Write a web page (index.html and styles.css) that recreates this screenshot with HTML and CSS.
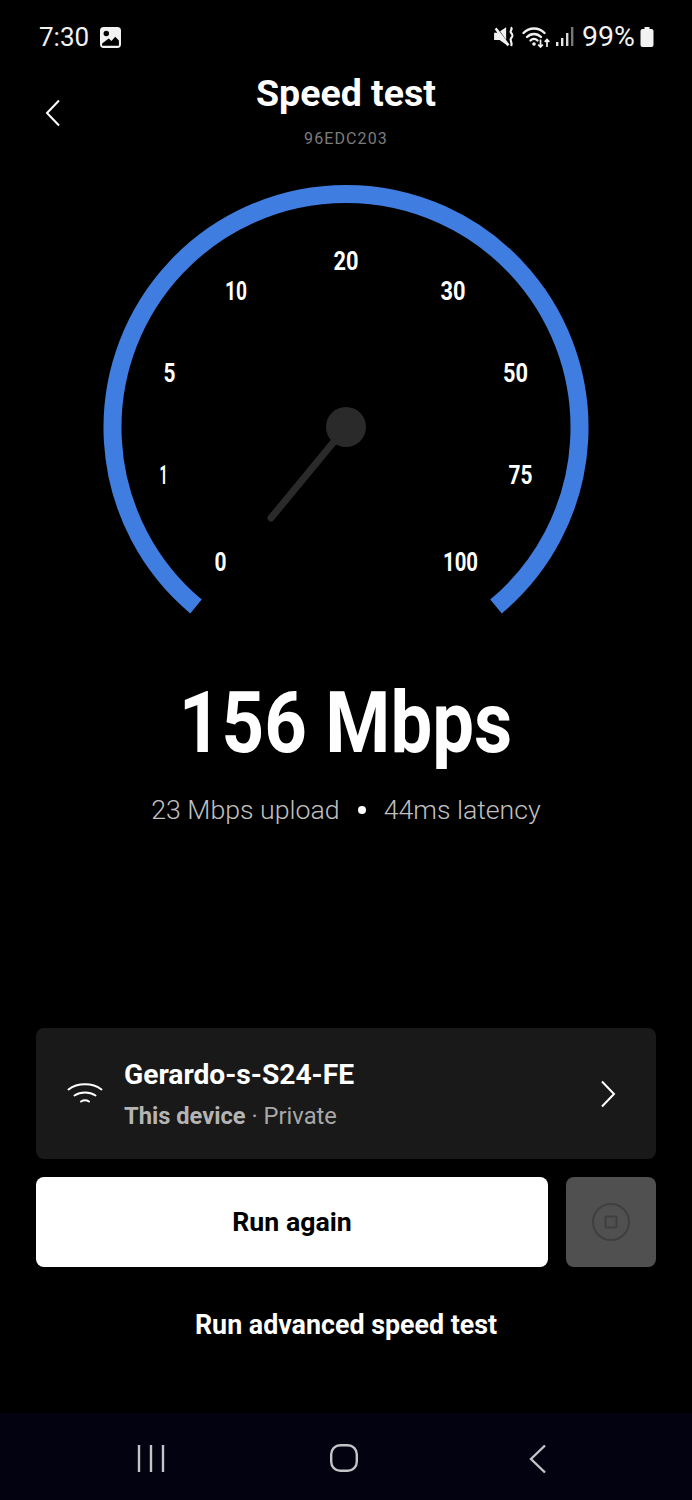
FILE: index.html
```html
<!DOCTYPE html>
<html lang="en">
<head>
<meta charset="utf-8">
<title>Speed test</title>
<link rel="stylesheet" href="styles.css">
</head>
<body>
<div class="screen">
  <div class="status">
    <div class="status-left">
      <span class="clock">7:30</span>
      <svg class="ic-gallery" viewBox="0 0 20 20"><path fill="#f2f2f2" fill-rule="evenodd" d="M3.500 0h13A3.500 3.500 0 0 1 20 3.500v13a3.500 3.500 0 0 1-3.500 3.500h-13A3.500 3.500 0 0 1 0 16.500v-13A3.500 3.500 0 0 1 3.500 0zM6 3.500a2.600 2.600 0 1 0 0 5.200 2.600 2.600 0 0 0 0-5.200zM2 17.800h16v-5l-3.500-3.600-3.600 4.200-2.600-2.400-6.300 4.800z"/></svg>
    </div>
    <div class="status-right">
      <svg class="ic-mute" viewBox="0 0 21 20"><path fill="#f2f2f2" d="M1 6.200h3L1.500 3 3.300 1.300 15 16.800 13.200 18.500 11.800 16.800 6 12.800H1z M6.500 4.800 12 1v11.500z"/><path fill="none" stroke="#f2f2f2" stroke-width="2" d="M16.500 1c1.800 2.400-1.800 3.200 0 5.200s1.800 3 0 5 1.800 3.400 0 7"/></svg>
      <svg class="ic-wifi" viewBox="0 0 28 22"><g fill="none" stroke="#f2f2f2" stroke-width="2.400" stroke-linecap="round"><path d="M1.500 7c6-6 15-6 21 0"/><path d="M5 11c4-4 10-4 14 0"/><path d="M8.500 14.500c2-2 5-2 7 0"/></g><circle cx="12" cy="18" r="1.800" fill="#f2f2f2"/><path fill="none" stroke="#f2f2f2" stroke-width="1.700" d="M18.500 13.500v7.500m-2.300-2.300 2.300 2.300 2.300-2.300M25 21v-7.500m-2.300 2.300 2.300-2.300 2.300 2.300"/></svg>
      <svg class="ic-signal" viewBox="0 0 18 20"><rect x="0" y="15" width="2.400" height="4" fill="#e8e8e8"/><rect x="5" y="11" width="2.400" height="8" fill="#e8e8e8"/><rect x="10" y="6" width="2.400" height="13" fill="#d8d8d8"/><rect x="15" y="0" width="2.400" height="19" fill="#777"/></svg>
      <span class="battery-text">99%</span>
      <svg class="ic-battery" viewBox="0 0 13 20"><path fill="#f2f2f2" d="M4 0h5v2h2a2 2 0 0 1 2 2v14a2 2 0 0 1-2 2H2a2 2 0 0 1-2-2V4a2 2 0 0 1 2-2h2z"/></svg>
    </div>
  </div>

  <header class="header">
    <svg class="back" viewBox="0 0 16 28"><path d="M14 1.500 2 14l12 12.500" fill="none" stroke="#fff" stroke-width="2"/></svg>
    <h1 class="title">Speed test</h1>
    <div class="serial">96EDC203</div>
  </header>

  <svg class="gauge" viewBox="0 0 692 460" role="img" aria-label="Speedometer">
    <path d="M196 426.500A233.500 233.500 0 1 1 496 426.500" fill="none" stroke="#3f7de0" stroke-width="18"/>
    <path d="M346 247 271 338" fill="none" stroke="#2a2a2a" stroke-width="7" stroke-linecap="round"/>
    <circle cx="346" cy="247" r="20" fill="#2a2a2a"/>
    <g class="tick">
      <text x="346" y="90" textLength="25" lengthAdjust="spacingAndGlyphs">20</text>
      <text x="236" y="120" textLength="22" lengthAdjust="spacingAndGlyphs">10</text>
      <text x="453" y="120" textLength="25" lengthAdjust="spacingAndGlyphs">30</text>
      <text x="169.500" y="202" textLength="12" lengthAdjust="spacingAndGlyphs">5</text>
      <text x="515.500" y="202" textLength="25" lengthAdjust="spacingAndGlyphs">50</text>
      <text x="163.500" y="304" textLength="8" lengthAdjust="spacingAndGlyphs">1</text>
      <text x="520.500" y="304" textLength="24" lengthAdjust="spacingAndGlyphs">75</text>
      <text x="220.500" y="391" textLength="12" lengthAdjust="spacingAndGlyphs">0</text>
      <text x="460.500" y="391" textLength="35" lengthAdjust="spacingAndGlyphs">100</text>
    </g>
  </svg>

  <div class="result"><span class="result-text">156 Mbps</span></div>
  <div class="stats"><span>23 Mbps upload</span><span class="dot"></span><span>44ms latency</span></div>

  <div class="device">
    <svg class="device-wifi" viewBox="0 0 36 24"><g fill="none" stroke="#fff" stroke-width="2" stroke-linecap="round"><path d="M1.500 7.500c9-7 24-7 33 0"/><path d="M7.500 13.500c6-4 15-4 21 0"/><path d="M14 19.500c2.500-1.500 5.500-1.500 8 0"/></g></svg>
    <div class="device-text">
      <div class="device-name">Gerardo-s-S24-FE</div>
      <div class="device-sub"><b>This device</b> · Private</div>
    </div>
    <svg class="chevron" viewBox="0 0 16 28"><path d="M2 1.500 14 14 2 26.500" fill="none" stroke="#fff" stroke-width="2"/></svg>
  </div>

  <div class="actions">
    <button class="run" type="button">Run again</button>
    <button class="stop" type="button" aria-label="Stop">
      <svg viewBox="0 0 38 38"><circle cx="19" cy="19" r="18" fill="none" stroke="#3f3f3f" stroke-width="2"/><rect x="13.500" y="13.500" width="11" height="11" rx="1" fill="none" stroke="#3f3f3f" stroke-width="2"/></svg>
    </button>
  </div>

  <div class="advanced">Run advanced speed test</div>

  <nav class="nav">
    <svg class="nav-recent" viewBox="0 0 28 28"><path d="M2 1v27M14 1v27M26 1v27" fill="none" stroke="#c4c4c8" stroke-width="2.400"/></svg>
    <svg class="nav-home" viewBox="0 0 28 28"><rect x="1.200" y="1.200" width="25.600" height="25.600" rx="9" fill="none" stroke="#c4c4c8" stroke-width="2.400"/></svg>
    <svg class="nav-back" viewBox="0 0 18 30"><path d="M16 1.500 2 15l14 13.500" fill="none" stroke="#c4c4c8" stroke-width="2.400"/></svg>
  </nav>
</div>
</body>
</html>
```

FILE: styles.css
```css
* { box-sizing: border-box; }
html, body { margin: 0; padding: 0; background: #000; }
body { font-family: Roboto, "Liberation Sans", sans-serif; color: #fff; }
.screen { width: 692px; height: 1500px; display: flex; flex-direction: column; overflow: hidden; background: #000; }

.status { height: 73px; padding: 22px 38px 0 39px; display: flex; justify-content: space-between; align-items: flex-start; color: #f2f2f2; font-size: 26px; line-height: 30px; }
.status-left, .status-right { display: flex; align-items: center; }
.clock { width: 61px; }
.ic-gallery { width: 21px; height: 21px; }
.ic-mute { width: 23px; height: 22px; margin-right: 6px; }
.ic-wifi { width: 28px; height: 22px; margin-right: 6px; }
.ic-signal { width: 18px; height: 20px; margin-right: 8px; }
.battery-text { width: 56px; font-size: 28.500px; }
.ic-battery { width: 14px; height: 20px; margin-left: 2px; }

.header { position: relative; height: 107px; text-align: center; }
.back { position: absolute; left: 45px; top: 26px; width: 16px; height: 28px; }
.title { margin: 0; font-size: 37.500px; line-height: 40px; font-weight: 700; }
.serial { margin-top: 16px; font-size: 16px; line-height: 20px; letter-spacing: 1.100px; color: #7c7c7c; }

.gauge { display: block; width: 692px; height: 460px; flex: none; }
.tick text { font-family: Roboto, sans-serif; font-size: 26px; font-weight: 700; fill: #fff; text-anchor: middle; }

.result { margin-top: 38px; height: 90px; font-size: 85px; line-height: 90px; font-weight: 700; text-align: center; white-space: nowrap; }
.result-text { display: inline-block; transform: scaleX(0.875); }
.stats { margin-top: 25px; height: 34px; display: flex; justify-content: center; align-items: center; gap: 18px; font-size: 26.700px; line-height: 34px; font-weight: 300; color: #c0c0c0; }
.dot { width: 8px; height: 8px; border-radius: 50%; background: #fff; }

.device { margin: 201px 36px 0; height: 131px; flex: none; background: #191919; border-radius: 8px; display: flex; align-items: center; padding: 0 40px 0 31px; }
.device-wifi { width: 36px; height: 24px; margin-right: 21px; }
.device-text { flex: 1; padding-top: 2px; }
.device-name { font-size: 28.200px; line-height: 34px; font-weight: 700; }
.device-sub { margin-top: 9px; font-size: 23.700px; line-height: 30px; color: #a8a8a8; }
.device-sub b { font-weight: 700; color: #b4b4b4; }
.chevron { width: 16px; height: 28px; }

.actions { margin: 18px 36px 0; display: flex; gap: 18px; height: 90px; flex: none; }
.run { flex: 1; border: 0; border-radius: 8px; background: #fff; color: #000; font-family: inherit; font-size: 26.700px; font-weight: 700; padding: 0; }
.stop { width: 90px; border: 0; border-radius: 8px; background: #505050; padding: 0; display: flex; align-items: center; justify-content: center; }
.stop svg { width: 38px; height: 38px; }

.advanced { margin-top: 41px; height: 34px; font-size: 26.800px; line-height: 34px; font-weight: 700; text-align: center; }

.nav { margin-top: auto; height: 87px; flex: none; background: #020210; display: flex; align-items: flex-start; padding-top: 31px; }
.nav-recent { width: 28px; height: 28px; margin-left: 137px; }
.nav-home { width: 28px; height: 28px; margin-left: 165px; }
.nav-back { width: 18px; height: 30px; margin-left: 171px; }
```
